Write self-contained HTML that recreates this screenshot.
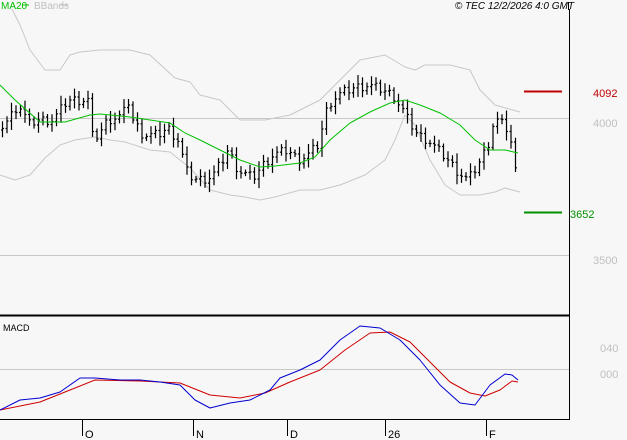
<!DOCTYPE html>
<html><head><style>
body{margin:0;background:#f7f7f7;width:627px;height:440px;overflow:hidden;font-family:"Liberation Sans",sans-serif}
svg{display:block}
</style></head><body>
<svg id="s" width="627" height="440" xmlns="http://www.w3.org/2000/svg">
<rect width="627" height="440" fill="#f7f7f7"/>
<g stroke="#c8c8c8" stroke-width="1">
<line x1="0" y1="118.5" x2="569" y2="118.5"/>
<line x1="0" y1="255.5" x2="569" y2="255.5"/>
<line x1="0" y1="369.5" x2="569" y2="369.5"/>
</g>
<polyline fill="none" stroke="#c8c8c8" stroke-width="1" stroke-linejoin="round" points="12,9 20,25 30,50 45,70 60,70 70,55 80,52 100,50 130,50 150,55 175,78 190,82 200,95 220,100 240,120 265,120 290,115 320,100 340,80 360,60 385,55 405,67 415,70 425,65 450,65 470,70 480,90 495,105 520,112"/>
<polyline fill="none" stroke="#c8c8c8" stroke-width="1" stroke-linejoin="round" points="0,175 15,180 30,175 45,158 60,145 75,140 95,137 110,140 125,142 150,150 170,152 190,168 210,190 230,195 245,197 260,200 275,197 300,190 320,190 340,185 365,175 385,160 395,140 405,115 415,125 430,160 445,185 460,195 480,195 495,192 505,188 520,192"/>
<g id="bars" stroke="#000" stroke-width="1.2"></g>
<polyline fill="none" stroke="#00c000" stroke-width="1" points="0,85 15,100 40,122 65,122 90,115 100,114 130,117 150,120 170,123 185,133 200,140 220,150 240,160 260,167 275,166 300,163 315,157 330,140 350,123 370,112 390,103 405,100 420,105 440,113 460,125 475,140 490,150 505,150 518,153"/>
<line x1="524" y1="91.5" x2="562" y2="91.5" stroke="#c00000" stroke-width="2"/>
<line x1="524" y1="212.5" x2="562" y2="212.5" stroke="#009000" stroke-width="2"/>
<polyline fill="none" stroke="#d00000" stroke-width="1" stroke-linejoin="round" points="0,410 40,402 70,390 95,380 140,381 180,383 210,395 240,398 265,393 290,382 320,370 345,350 370,333 390,332 410,342 430,362 450,382 470,393 485,396 500,390 512,381 518,382"/>
<polyline fill="none" stroke="#0000d0" stroke-width="1" stroke-linejoin="round" points="0,410 20,400 40,398 60,392 80,378 95,378 120,380 140,380 160,382 180,385 195,400 210,408 230,403 250,400 270,390 280,378 300,370 320,360 340,340 360,326 380,328 400,340 420,360 440,385 460,403 475,405 490,385 505,374 512,375 518,380"/>
<line x1="0" y1="315.5" x2="569" y2="315.5" stroke="#000" stroke-width="2"/>
<line x1="569.5" y1="9" x2="569.5" y2="419" stroke="#000" stroke-width="1"/>
<line x1="0" y1="419.5" x2="570" y2="419.5" stroke="#000" stroke-width="1"/>
<g stroke="#000" stroke-width="1">
<line x1="82.5" y1="419" x2="82.5" y2="436"/><line x1="193.5" y1="419" x2="193.5" y2="436"/><line x1="287.5" y1="419" x2="287.5" y2="436"/><line x1="385.5" y1="419" x2="385.5" y2="436"/><line x1="486.5" y1="419" x2="486.5" y2="436"/>
</g>
<g font-size="11" fill="#000">
<text x="85" y="438">O</text><text x="196" y="438">N</text><text x="290" y="438">D</text><text x="388" y="438">26</text><text x="489" y="438">F</text>
</g>
<line x1="568.5" y1="2" x2="568.5" y2="10" stroke="#000"/>
<text x="1" y="9" font-size="10" fill="#00c000">MA20</text>
<line x1="22" y1="5" x2="29" y2="5" stroke="#00c000"/>
<text x="34" y="9" font-size="10" fill="#c0c0c0">BBands</text>
<line x1="60" y1="5" x2="68" y2="5" stroke="#c0c0c0"/>
<text x="574" y="9" font-size="10" font-style="italic" fill="#000" text-anchor="end">© TEC 12/2/2026 4:0 GMT</text>
<text x="3" y="331" font-size="9" fill="#000">MACD</text>
<g font-size="11">
<text x="593" y="97" fill="#c00000">4092</text>
<text x="593" y="127" fill="#c0c0c0">4000</text>
<text x="570" y="218" fill="#009000">3652</text>
<text x="593" y="264" fill="#c0c0c0">3500</text>
<text x="600" y="352" fill="#c0c0c0">040</text>
<text x="600" y="378" fill="#c0c0c0">000</text>
</g>
</svg>
<script>
var pts=[[0,130],[10,120],[20,105],[25,110],[30,125],[40,120],[55,120],[70,100],[90,100],[95,140],[100,135],[110,120],[125,115],[130,100],[135,120],[145,135],[160,135],[170,128],[180,140],[190,175],[200,180],[210,178],[215,175],[225,160],[230,150],[240,170],[255,178],[265,165],[275,155],[290,150],[300,160],[310,155],[320,145],[325,125],[330,105],[340,95],[355,88],[370,85],[385,90],[395,95],[405,110],[410,120],[420,135],[430,140],[440,150],[450,160],[460,172],[470,180],[480,165],[490,145],[495,125],[500,120],[505,125],[510,130],[515,150],[518,175]];
function f(x){for(var i=1;i<pts.length;i++){if(x<=pts[i][0]){var a=pts[i-1],b=pts[i];return a[1]+(b[1]-a[1])*(x-a[0])/(b[0]-a[0]);}}return pts[pts.length-1][1];}
var g=document.getElementById('bars'),d='',prev=f(0),k=0;
for(var x=2.5;x<=519;x+=4.5){k++;var c=f(x+2)+(((k*5)%7)-3)*1.5,o=prev,r=5+((k*7)%11);var hi=Math.min(o,c)-r*0.6,lo=Math.max(o,c)+r*0.6;
d+='M'+x+' '+hi.toFixed(1)+'V'+lo.toFixed(1)+'M'+(x-1.5)+' '+o.toFixed(1)+'H'+x+'M'+x+' '+c.toFixed(1)+'H'+(x+1.5);prev=c;}
var p=document.createElementNS('http://www.w3.org/2000/svg','path');p.setAttribute('d',d);p.setAttribute('fill','none');g.appendChild(p);
</script>
</body></html>
